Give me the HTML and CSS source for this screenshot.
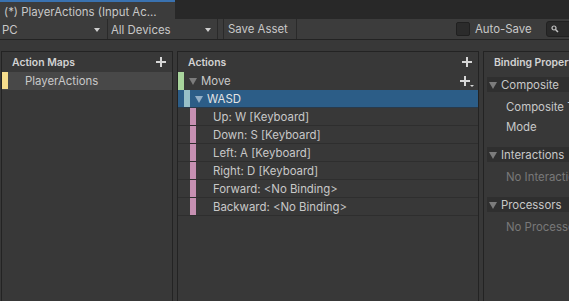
FILE: index.html
```html
<!DOCTYPE html>
<html lang="en">
<head>
    <meta charset="UTF-8">
    <meta name="viewport" content="width=device-width, initial-scale=1.0">
    <title>PlayerActions (Input Actions)</title>
    <link rel="stylesheet" href="styles.css">
</head>
<body>
    <div class="tabbar">
        <div class="tab">(*) PlayerActions (Input Ac...</div>
    </div>

    <div class="toolbar">
        <div class="dropdown scheme">
            <span>PC</span>
            <svg class="arrow" width="6" height="4" viewBox="0 0 6 4"><polygon points="0,0 6,0 3,4"/></svg>
        </div>
        <div class="dropdown devices">
            <span>All Devices</span>
            <svg class="arrow" width="6" height="4" viewBox="0 0 6 4"><polygon points="0,0 6,0 3,4"/></svg>
        </div>
        <div class="tool-btn">Save Asset</div>
        <label class="autosave">
            <span class="checkbox"></span>
            <span>Auto-Save</span>
        </label>
        <div class="search">
            <svg width="8" height="8" viewBox="0 0 8 8">
                <circle cx="3" cy="3" r="2" fill="none" stroke="#c4c4c4" stroke-width="1.2"/>
                <line x1="4.5" y1="4.5" x2="7" y2="7" stroke="#c4c4c4" stroke-width="1.5"/>
            </svg>
        </div>
    </div>

    <div class="panes">
        <div class="panel maps">
            <div class="panel-header">
                <span>Action Maps</span>
                <svg class="plus" width="10" height="10" viewBox="0 0 10 10"><rect x="4" y="0" width="2" height="10"/><rect x="0" y="4" width="10" height="2"/></svg>
            </div>
            <div class="row map-row">
                <span class="bar map-bar"></span>
                <span class="label">PlayerActions</span>
            </div>
        </div>

        <div class="panel actions">
            <div class="panel-header">
                <span>Actions</span>
                <svg class="plus" width="10" height="10" viewBox="0 0 10 10"><rect x="4" y="0" width="2" height="10"/><rect x="0" y="4" width="10" height="2"/></svg>
            </div>
            <div class="row action-row">
                <span class="bar action-bar"></span>
                <svg class="fold" width="8" height="7" viewBox="0 0 8 7"><polygon points="0,0 8,0 4,7"/></svg>
                <span class="label">Move</span>
                <svg class="plus-menu" width="14" height="11" viewBox="0 0 14 11"><rect x="4" y="0" width="2" height="10"/><rect x="0" y="4" width="10" height="2"/><polygon points="10,9 14,9 12,11"/></svg>
            </div>
            <div class="row composite-row selected">
                <span class="indent"></span>
                <span class="bar composite-bar"></span>
                <svg class="fold" width="8" height="7" viewBox="0 0 8 7"><polygon points="0,0 8,0 4,7"/></svg>
                <span class="label">WASD</span>
            </div>
            <div class="row binding-row"><span class="indent wide"></span><span class="bar binding-bar"></span><span class="label">Up: W [Keyboard]</span></div>
            <div class="row binding-row"><span class="indent wide"></span><span class="bar binding-bar"></span><span class="label">Down: S [Keyboard]</span></div>
            <div class="row binding-row"><span class="indent wide"></span><span class="bar binding-bar"></span><span class="label">Left: A [Keyboard]</span></div>
            <div class="row binding-row"><span class="indent wide"></span><span class="bar binding-bar"></span><span class="label">Right: D [Keyboard]</span></div>
            <div class="row binding-row"><span class="indent wide"></span><span class="bar binding-bar"></span><span class="label">Forward: &lt;No Binding&gt;</span></div>
            <div class="row binding-row"><span class="indent wide"></span><span class="bar binding-bar"></span><span class="label">Backward: &lt;No Binding&gt;</span></div>
        </div>

        <div class="panel props">
            <div class="panel-header">
                <span>Binding Properties</span>
            </div>
            <div class="foldout first">
                <svg class="fold" width="8" height="7" viewBox="0 0 8 7"><polygon points="0,0 8,0 4,7"/></svg>
                <span>Composite</span>
            </div>
            <div class="prop-list">
                <div class="prop">Composite Type</div>
                <div class="prop">Mode</div>
            </div>
            <div class="foldout">
                <svg class="fold" width="8" height="7" viewBox="0 0 8 7"><polygon points="0,0 8,0 4,7"/></svg>
                <span>Interactions</span>
            </div>
            <div class="prop-list">
                <div class="prop muted">No Interactions have been added.</div>
            </div>
            <div class="foldout">
                <svg class="fold" width="8" height="7" viewBox="0 0 8 7"><polygon points="0,0 8,0 4,7"/></svg>
                <span>Processors</span>
            </div>
            <div class="prop-list">
                <div class="prop muted">No Processors have been added.</div>
            </div>
        </div>
    </div>
</body>
</html>
```

FILE: styles.css
```css
body {
    margin: 0;
    width: 569px;
    height: 301px;
    overflow: hidden;
    background-color: #383838;
    color: #c8c8c8;
    font-family: Inter, "Noto Sans", sans-serif;
    font-size: 11.4px;
}
svg {
    display: block;
    flex-shrink: 0;
}

/* Window tab strip */
.tabbar {
    height: 19px;
    background-color: #282828;
    display: flex;
}
.tab {
    width: 175px;
    box-sizing: border-box;
    border-top: 2px solid #3a72b0;
    background-color: #3c3c3c;
    padding: 2px 0 0 4px;
    line-height: 16px;
    white-space: nowrap;
    overflow: hidden;
}

/* Toolbar */
.toolbar {
    height: 20px;
    background-color: #3c3c3c;
    border-bottom: 1px solid #232323;
    display: flex;
    align-items: center;
    overflow: hidden;
}
.dropdown {
    height: 20px;
    box-sizing: border-box;
    display: flex;
    align-items: center;
    justify-content: space-between;
    border-right: 1px solid #2a2a2a;
    flex-shrink: 0;
    padding-top: 1px;
}
.dropdown .arrow {
    fill: #d0d0d0;
}
.scheme {
    width: 108px;
    padding-left: 2px;
    padding-right: 7px;
}
.devices {
    width: 110px;
    padding-left: 3px;
    padding-right: 6px;
}
.tool-btn {
    height: 20px;
    box-sizing: border-box;
    margin-left: 5px;
    padding: 1px 4px 0;
    width: 74px;
    line-height: 19px;
    border-left: 1px solid #2a2a2a;
    border-right: 1px solid #2a2a2a;
    flex-shrink: 0;
}
.autosave {
    display: flex;
    align-items: center;
    gap: 5px;
    margin-left: 159px;
    flex-shrink: 0;
}
.checkbox {
    width: 12px;
    height: 12px;
    background-color: #2b2b2b;
    border: 1px solid #202020;
    border-radius: 2px;
}
.search {
    width: 30px;
    height: 14px;
    margin-left: 14px;
    flex-shrink: 0;
    background-color: #2a2a2a;
    border: 1px solid #212121;
    border-radius: 3px;
    display: flex;
    align-items: center;
    padding-left: 4px;
}

/* Panels */
.panes {
    display: flex;
    gap: 4px;
    padding: 11px 0 0 1px;
}
.panel {
    height: 260px;
    box-sizing: border-box;
    border: 1px solid #232323;
    border-bottom: none;
    background-color: #383838;
    display: flex;
    flex-direction: column;
    flex-shrink: 0;
    overflow: hidden;
}
.maps {
    width: 172px;
}
.actions {
    width: 302px;
}
.props {
    width: 100px;
}
.panel-header {
    height: 20px;
    display: flex;
    align-items: center;
    justify-content: space-between;
    padding: 0 6px 0 10px;
    font-size: 10.4px;
    font-weight: 600;
    white-space: nowrap;
    color: #d2d2d2;
}
.plus,
.plus-menu {
    fill: #d6d6d6;
}

/* Tree rows */
.row {
    height: 17px;
    display: flex;
    align-items: center;
    border-bottom: 1px solid #2e2e2e;
    white-space: nowrap;
}
.bar {
    width: 6px;
    height: 100%;
    flex-shrink: 0;
}
.indent {
    width: 6px;
    flex-shrink: 0;
}
.indent.wide {
    width: 12px;
}
.fold {
    fill: #7c7c7c;
    margin: 1px 4px 0 5px;
}
.map-row {
    background-color: #484848;
    border-bottom-color: #484848;
}
.map-bar {
    background-color: #f6dd8c;
}
.map-row .label {
    margin-left: 17px;
}
.action-row {
    height: 18px;
    border-bottom: none;
}
.action-bar {
    background-color: #a8d49c;
}
.action-row .label {
    flex: 1;
}
.plus-menu {
    margin-right: 4px;
}
.selected {
    background-color: #2c5d87;
    border-bottom-color: #283a4c;
    color: #e4e4e4;
}
.composite-bar {
    background-color: #98c0c8;
}
.selected .fold {
    fill: #93afc6;
}
.binding-bar {
    background-color: #c690b2;
}
.binding-row .label {
    margin-left: 17px;
}

/* Binding properties */
.foldout {
    height: 15px;
    margin: 11px 0 0 3px;
    display: flex;
    align-items: center;
    background-color: #2f2f2f;
    white-space: nowrap;
}
.foldout.first {
    margin-top: 5px;
}
.foldout .fold {
    margin: 1px 4px 0 2px;
}
.prop-list {
    padding-top: 5px;
}
.prop {
    height: 20px;
    line-height: 20px;
    padding-left: 22px;
    white-space: nowrap;
}
.prop.muted {
    color: #787878;
}
.foldout + .prop-list + .foldout {
    margin-top: 10px;
}
```
